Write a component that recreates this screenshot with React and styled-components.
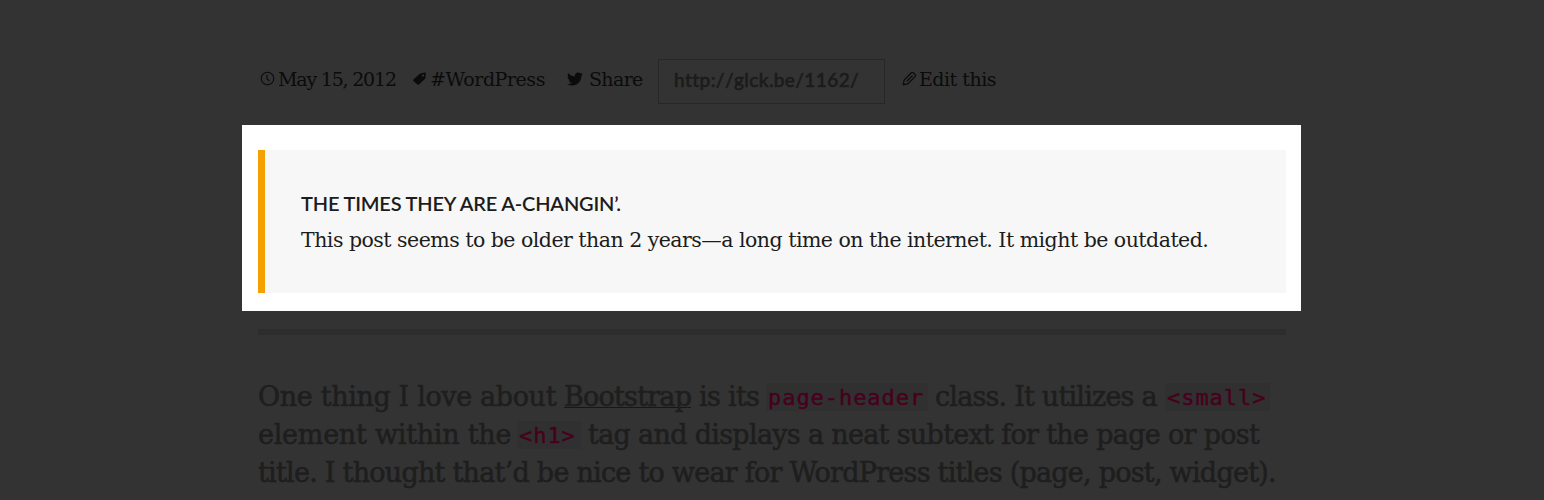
import React from 'react';
import styled, { createGlobalStyle } from 'styled-components';
import { FaTwitter } from 'react-icons/fa';

const slab = '"DejaVu Serif", serif';

const GlobalStyle = createGlobalStyle`
  * { box-sizing: border-box; }
  body { margin: 0; background: #333; }
`;

const Page = styled.main`
  height: 500px;
  overflow: hidden;
  background: #333;
  padding: 59px 0 0 242px;
  font-family: ${slab};
`;

const MetaBar = styled.div`
  display: flex;
  height: 45px;
  padding-left: 16px;
  color: #0b0b0b;
  font-size: 19px;
  line-height: 41px;
`;

const MetaItem = styled.div`
  display: flex;
  flex: none;
  width: ${(p) => p.$width}px;
  padding-left: ${(p) => p.$indent || 1}px;
  gap: ${(p) => p.$gap || 3}px;
  letter-spacing: ${(p) => p.$spacing}px;
  white-space: nowrap;

  svg {
    flex: none;
    margin-top: 12px;
  }
`;

const ShortLink = styled.input`
  width: 227px;
  height: 45px;
  margin: 0 16px 0 0;
  padding: 0 15px 4px;
  border: 1px solid #272727;
  border-radius: 0;
  outline: none;
  background: transparent;
  color: #1b1b1b;
  font: 500 19px Lato, sans-serif;
  font-kerning: none;
  letter-spacing: 0.4px;
  -webkit-text-stroke: 0.5px #1b1b1b;
`;

const Spotlight = styled.section`
  width: 1059px;
  height: 186px;
  margin-top: 21px;
  padding: 25px 15px 18px 16px;
  background: #fff;
`;

const Notice = styled.div`
  height: 143px;
  padding: 35px 0 0 36px;
  border-left: 7px solid #f4a000;
  background: #f7f7f7;
  color: #1c1c1c;
`;

const NoticeTitle = styled.h2`
  margin: 0;
  font: 600 20px/36px Lato, sans-serif;
  letter-spacing: -0.18px;
  text-transform: uppercase;
`;

const NoticeText = styled.p`
  margin: 0;
  font-size: 20.5px;
  line-height: 39px;
  letter-spacing: -0.517px;
  white-space: nowrap;
`;

const Divider = styled.hr`
  width: 1028px;
  height: 6px;
  margin: 18px 0 0 16px;
  border: 0;
  background: #2d2d2d;
`;

const Article = styled.article`
  padding: 43px 0 0 16px;
  color: #1e1e1e;
  font-size: 27px;
  -webkit-text-stroke: 0.6px #1e1e1e;
`;

const Line = styled.div`
  display: flex;
  height: 38px;
  line-height: 37px;
  white-space: nowrap;
`;

const Phrase = styled.span`
  flex: none;
  width: ${(p) => p.$width}px;
  letter-spacing: ${(p) => p.$spacing}px;
`;

const TextLink = styled.a`
  flex: none;
  width: 127px;
  height: 30px;
  margin-right: 8px;
  border-bottom: 1px solid #171717;
  letter-spacing: -0.78px;
`;

const Code = styled.code`
  flex: none;
  width: ${(p) => p.$width}px;
  height: 28px;
  margin: 5px 7px 0 0;
  padding-left: 2px;
  border-radius: 2px;
  background: #303030;
  color: #48001d;
  font: 22px/30px "DejaVu Sans Mono", monospace;
  letter-spacing: 0.95px;
  -webkit-text-stroke: 0.4px #48001d;
`;

const ClockIcon = () => (
  <svg width="15" height="15" viewBox="0 0 15 15" fill="none" stroke="currentColor">
    <circle cx="7.5" cy="7.5" r="6.3" strokeWidth="1.1" />
    <path d="M7 3.5v4.2l2.4 2.5" strokeWidth="1.1" />
  </svg>
);

const TagIcon = () => (
  <svg width="15" height="15" viewBox="0 0 15 15" fill="currentColor">
    <path
      fillRule="evenodd"
      d="M8.4 2.4 13 1.6q.9 0 .9.9l-.5 4.4q-.1.6-.5 1l-6 5.7q-.7.6-1.4 0L1.4 9.9q-.6-.7 0-1.4l6-5.6q.4-.4 1-.5ZM11.1 3.4a1.15 1.15 0 1 0 0 2.3 1.15 1.15 0 0 0 0-2.3Z"
    />
  </svg>
);

const PencilIcon = () => (
  <svg width="15" height="15" viewBox="0 0 15 15" fill="none" stroke="currentColor" strokeWidth="1.3" strokeLinejoin="round">
    <path d="m1.3 13.7.8-4.6 7.2-7.3q1-.9 2 0l1.8 1.8q.9 1 0 2l-7.3 7.3-4.5.8ZM4.8 10.3l5.7-5.7" />
  </svg>
);

export default function App() {
  return (
    <>
      <GlobalStyle />
      <Page>
        <MetaBar>
          <MetaItem $width={153} $spacing={-1.2} $gap={3} $indent={2}>
            <ClockIcon />
            <span>May 15, 2012</span>
          </MetaItem>
          <MetaItem $width={154} $spacing={-0.45}>
            <TagIcon />
            <span>#WordPress</span>
          </MetaItem>
          <MetaItem $width={93} $spacing={-0.65} $gap={6} $indent={2}>
            <FaTwitter size={16} />
            <span>Share</span>
          </MetaItem>
          <ShortLink readOnly value="http://glck.be/1162/" />
          <MetaItem $width={110} $spacing={-0.5} $gap={2}>
            <PencilIcon />
            <span>Edit this</span>
          </MetaItem>
        </MetaBar>

        <Spotlight>
          <Notice>
            <NoticeTitle>The times they are a-changin’.</NoticeTitle>
            <NoticeText>
              This post seems to be older than 2 years—a long time on the internet. It might be outdated.
            </NoticeText>
          </Notice>
        </Spotlight>

        <Divider />

        <Article>
          <Line>
            <Phrase $width={306} $spacing={-0.36}>One thing I love about</Phrase>
            <TextLink>Bootstrap</TextLink>
            <Phrase $width={67} $spacing={-0.7}>is its</Phrase>
            <Code $width={162}>page-header</Code>
            <Phrase $width={230} $spacing={-0.8}>class. It utilizes a</Phrase>
            <Code $width={105}>&lt;small&gt;</Code>
          </Line>
          <Line>
            <Phrase $width={259} $spacing={-0.26}>element within the</Phrase>
            <Code $width={64}>&lt;h1&gt;</Code>
            <Phrase $width={672} $spacing={-0.69}>tag and displays a neat subtext for the page or post</Phrase>
          </Line>
          <Line>
            <Phrase $width={1028} $spacing={-0.755}>
              title. I thought that’d be nice to wear for WordPress titles (page, post, widget).
            </Phrase>
          </Line>
        </Article>
      </Page>
    </>
  );
}
